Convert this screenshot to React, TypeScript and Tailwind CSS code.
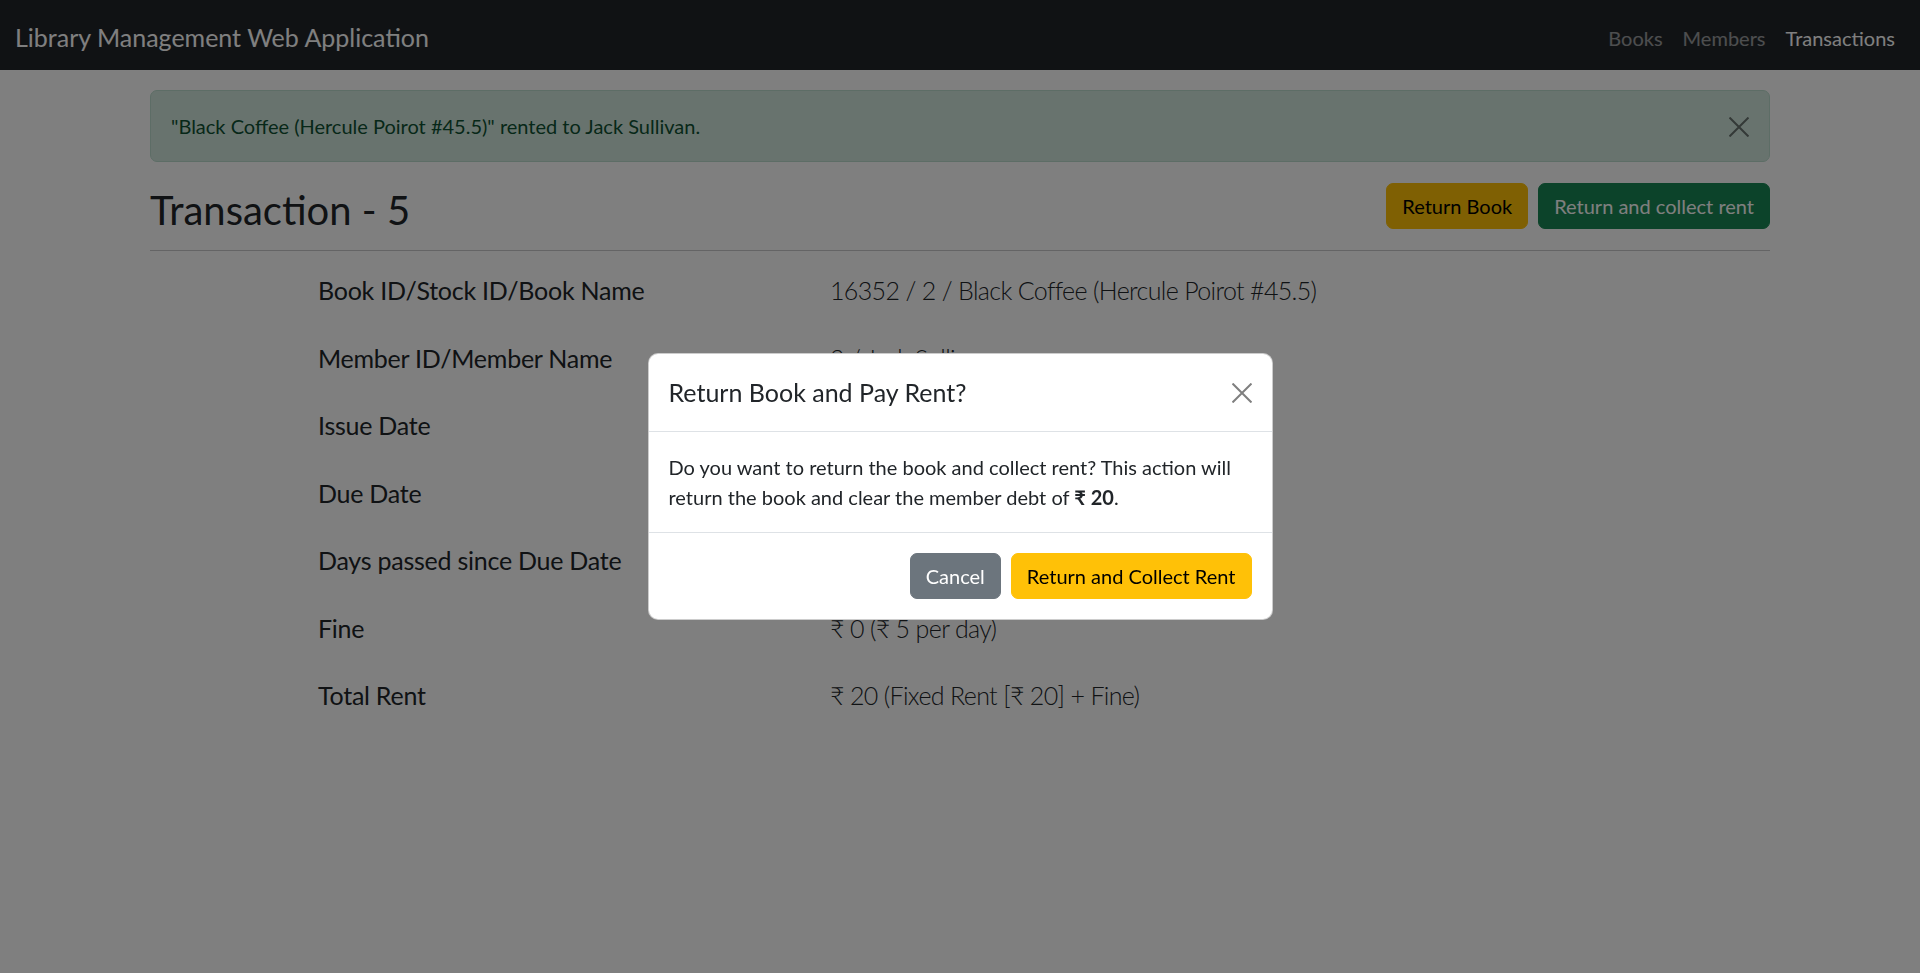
import React from 'react';

const rows = [
  { label: 'Book ID/Stock ID/Book Name', value: '16352 / 2 / Black Coffee (Hercule Poirot #45.5)' },
  { label: 'Member ID/Member Name', value: '2 / Jack Sullivan' },
  { label: 'Issue Date', value: '2023-04-10' },
  { label: 'Due Date', value: '2023-04-24' },
  { label: 'Days passed since Due Date', value: '0' },
  { label: 'Fine', value: '₹ 0 (₹ 5 per day)' },
  { label: 'Total Rent', value: '₹ 20 (Fixed Rent [₹ 20] + Fine)' },
];

function CloseX({ className }: { className?: string }) {
  return (
    <svg viewBox="0 0 16 16" className={className} fill="none" stroke="currentColor" strokeWidth="1.6" strokeLinecap="square">
      <path d="M1 1L15 15M15 1L1 15" />
    </svg>
  );
}

export default function App() {
  return (
    <div className="relative min-h-screen bg-white font-[Lato,'Noto_Sans',sans-serif] text-[#212529]">
      {/* Navbar */}
      <nav className="flex h-[70px] items-center justify-between bg-[#212529] px-[15px] pt-[5px]">
        <span className="text-[25px] leading-[1.5] text-white">Library Management Web Application</span>
        <div className="flex text-[20px] leading-[1.5]">
          <a className="px-[10px] text-white/55">Books</a>
          <a className="px-[10px] text-white/55">Members</a>
          <a className="px-[10px] text-white">Transactions</a>
        </div>
      </nav>

      <main className="mx-auto w-[1650px] px-[15px] pt-[20px]">
        {/* Alert */}
        <div className="relative mb-[20px] rounded-[7px] border border-[#badbcc] bg-[#d1e7dd] p-[20px] pr-[60px] text-[20px] leading-[30px] text-[#0f5132]">
          "Black Coffee (Hercule Poirot #45.5)" rented to Jack Sullivan.
          <button className="absolute right-[20px] top-[26px] text-black/50">
            <CloseX className="h-[20px] w-[20px]" />
          </button>
        </div>

        {/* Header */}
        <div className="flex items-center justify-between border-b border-[#c8c9ca] pb-[20px]">
          <h2 className="translate-y-[4px] text-[40px] leading-[1.2]">Transaction - 5</h2>
          <div className="flex gap-[10px]">
            <button className="rounded-[7px] border border-[#ffc107] bg-[#ffc107] px-[15px] py-[7px] text-[20px] leading-[30px] text-black">
              Return Book
            </button>
            <button className="rounded-[7px] border border-[#198754] bg-[#198754] px-[15px] py-[7px] text-[20px] leading-[30px] text-white">
              Return and collect rent
            </button>
          </div>
        </div>

        {/* Details */}
        <div className="flex flex-col gap-[30px] pl-[168px] pt-[21px]">
          {rows.map((r) => (
            <div key={r.label} className="flex text-[25px] leading-[1.5]">
              <div className="w-[512px] tracking-[-0.25px]">{r.label}</div>
              <div className="font-light tracking-[-0.65px]">{r.value}</div>
            </div>
          ))}
        </div>
      </main>

      {/* Backdrop */}
      <div className="fixed inset-0 bg-black/50" />

      {/* Modal */}
      <div className="fixed inset-0 flex items-center justify-center">
        <div className="w-[625px] rounded-[10px] border border-black/20 bg-white">
          <div className="flex items-center justify-between border-b border-[#dee2e6] p-[20px]">
            <h5 className="text-[25px] leading-[1.5]">Return Book and Pay Rent?</h5>
            <button className="text-black/50">
              <CloseX className="h-[20px] w-[20px]" />
            </button>
          </div>
          <div className="p-[20px] text-[20px] leading-[30px]">
            Do you want to return the book and collect rent? This action will return the book and clear the member
            debt of <b>₹ 20</b>.
          </div>
          <div className="flex justify-end gap-[10px] border-t border-[#dee2e6] px-[20px] py-[20px]">
            <button className="rounded-[7px] border border-[#6c757d] bg-[#6c757d] px-[15px] py-[7px] text-[20px] leading-[30px] text-white">
              Cancel
            </button>
            <button className="rounded-[7px] border border-[#ffc107] bg-[#ffc107] px-[15px] py-[7px] text-[20px] leading-[30px] text-black">
              Return and Collect Rent
            </button>
          </div>
        </div>
      </div>
    </div>
  );
}
